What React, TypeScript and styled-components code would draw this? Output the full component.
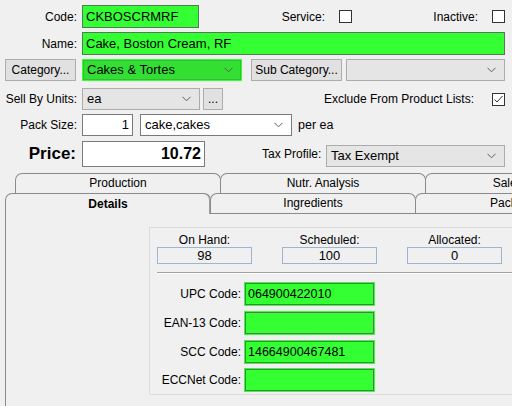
import React from "react";
import styled, { createGlobalStyle } from "styled-components";

const GlobalStyle = createGlobalStyle`
  html, body {
    margin: 0;
    padding: 0;
    background: #f0f0f0;
    width: 512px;
    height: 406px;
    overflow: hidden;
  }
  body {
    font-family: "Liberation Sans", Arial, sans-serif;
    font-size: 13px;
    color: #000;
  }
  * { box-sizing: border-box; }
`;

const Page = styled.div`
  width: 512px;
  height: 406px;
  overflow: hidden;
  display: flex;
  flex-direction: column;
  padding-top: 5px;
`;

const Row = styled.div<{ $h: number; $mt?: number; $pl?: number }>`
  display: flex;
  align-items: center;
  height: ${(p) => p.$h}px;
  margin-top: ${(p) => p.$mt ?? 0}px;
  padding-left: ${(p) => p.$pl ?? 0}px;
  flex-shrink: 0;
`;

const Label = styled.span<{ $w: number; $ml?: number; $bold?: boolean }>`
  width: ${(p) => p.$w}px;
  margin-left: ${(p) => p.$ml ?? 0}px;
  flex-shrink: 0;
  text-align: right;
  white-space: nowrap;
  font-weight: ${(p) => (p.$bold ? 700 : 400)};
  font-size: ${(p) => (p.$bold ? "17px" : "12px")};
  color: #000;
`;

const Field = styled.div<{
  $w: number;
  $h?: number;
  $ml?: number;
  $green?: boolean;
  $right?: boolean;
  $bold?: boolean;
}>`
  width: ${(p) => p.$w}px;
  height: ${(p) => p.$h ?? 23}px;
  margin-left: ${(p) => p.$ml ?? 0}px;
  flex-shrink: 0;
  display: flex;
  align-items: center;
  justify-content: ${(p) => (p.$right ? "flex-end" : "flex-start")};
  padding: 0 3px 1px 3px;
  background: ${(p) => (p.$green ? "#33ff33" : "#ffffff")};
  border: 1px solid ${(p) => (p.$green ? "#56785a" : "#7a7a7a")};
  font-weight: ${(p) => (p.$bold ? 700 : 400)};
  font-size: ${(p) => (p.$bold ? "16px" : "13px")};
  white-space: nowrap;
  overflow: hidden;
`;

const ComboBox = styled.div<{ $w: number; $ml?: number; $kind: "gray" | "white" | "green"; $end?: boolean }>`
  width: ${(p) => p.$w}px;
  height: 22px;
  margin-left: ${(p) => p.$ml ?? 0}px;
  align-self: ${(p) => (p.$end ? "flex-end" : "center")};
  flex-shrink: 0;
  display: flex;
  align-items: center;
  justify-content: space-between;
  padding: 0 8px 1px 4px;
  background: ${(p) => (p.$kind === "green" ? "#33df33" : p.$kind === "white" ? "#ffffff" : "#e5e5e5")};
  border: 1px solid ${(p) => (p.$kind === "green" ? "#33ff33" : p.$kind === "white" ? "#7a7a7a" : "#acacac")};
  box-shadow: ${(p) => (p.$kind === "green" ? "inset 0 0 0 1px #2fbf2f" : "none")};
  white-space: nowrap;
`;

const Chevron = () => (
  <svg width="9" height="6" viewBox="0 0 9 6" style={{ flexShrink: 0 }}>
    <polyline points="0.5,0.8 4.5,4.8 8.5,0.8" fill="none" stroke="#5e5e5e" strokeWidth="1" />
  </svg>
);

const Button = styled.div<{ $w: number; $ml?: number }>`
  width: ${(p) => p.$w}px;
  height: 22px;
  margin-left: ${(p) => p.$ml ?? 0}px;
  flex-shrink: 0;
  display: flex;
  align-items: center;
  justify-content: center;
  padding-bottom: 1px;
  background: #e1e1e1;
  border: 1px solid #adadad;
  font-size: 12px;
  white-space: nowrap;
`;

const Check = styled.div<{ $ml: number }>`
  width: 13px;
  height: 13px;
  margin-left: ${(p) => p.$ml}px;
  flex-shrink: 0;
  background: #ffffff;
  border: 1px solid #333333;
  display: flex;
  align-items: center;
  justify-content: center;
`;

const Plain = styled.span<{ $ml: number; $size?: number }>`
  margin-left: ${(p) => p.$ml}px;
  font-size: ${(p) => p.$size ?? 12}px;
  white-space: nowrap;
`;

const Spacer = styled.div`
  flex: 1;
`;

/* ---- tabs ---- */
const TabArea = styled.div`
  margin-top: 6px;
  display: flex;
  flex-direction: column;
  flex: 1;
  min-height: 0;
`;

const TabRow = styled.div<{ $pl: number; $front?: boolean }>`
  display: flex;
  height: 20px;
  padding-left: ${(p) => p.$pl}px;
  flex-shrink: 0;
  position: relative;
  z-index: ${(p) => (p.$front ? 2 : 1)};
`;

const Tab = styled.div<{ $active?: boolean; $first?: boolean }>`
  width: 206px;
  flex-shrink: 0;
  margin-left: ${(p) => (p.$first ? 0 : -1)}px;
  height: ${(p) => (p.$active ? 21 : 20)}px;
  display: flex;
  align-items: center;
  justify-content: center;
  padding-bottom: 1px;
  background: #f0f0f0;
  border: 1px solid #8a8a8a;
  border-bottom: none;
  border-radius: 7px 7px 0 0;
  font-size: 12px;
  font-weight: ${(p) => (p.$active ? 700 : 400)};
  box-shadow: ${(p) => (p.$active ? "inset -1px 0 0 #a0a0a0" : "none")};
  position: relative;
  z-index: ${(p) => (p.$active ? 3 : 1)};
  white-space: nowrap;
  overflow: hidden;
`;

const Panel = styled.div`
  flex: 1;
  margin-left: 5px;
  border-left: 1px solid #8a8a8a;
  border-top: 1px solid #8a8a8a;
  background: #f0f0f0;
  display: flex;
  padding: 13px 0 0 143px;
  position: relative;
  z-index: 1;
`;

const Group = styled.div`
  width: 380px;
  height: 168px;
  flex-shrink: 0;
  border: 1px solid #dcdcdc;
  display: flex;
  flex-direction: column;
  padding: 5px 0 0 0;
`;

const StatsRow = styled.div`
  display: flex;
  gap: 30px;
  padding-left: 7px;
`;

const StatCol = styled.div`
  width: 95px;
  display: flex;
  flex-direction: column;
  align-items: center;
`;

const StatLabel = styled.div`
  height: 14px;
  line-height: 14px;
  font-size: 12px;
`;

const StatBox = styled.div`
  width: 95px;
  height: 17px;
  border: 1px solid #9cb5d3;
  display: flex;
  align-items: center;
  justify-content: center;
  padding-bottom: 1px;
`;

const Separator = styled.div`
  margin: 8px 0 0 7px;
  height: 1px;
  background: #a0a0a0;
  box-shadow: 0 1px 0 #ffffff;
`;

const CodeRow = styled.div<{ $mt: number }>`
  display: flex;
  align-items: center;
  margin-top: ${(p) => p.$mt}px;
  height: 24px;
`;

const CodeField = styled.div`
  width: 131px;
  height: 24px;
  margin-left: 3px;
  background: #33ff33;
  border: 1px solid #33ff33;
  box-shadow: inset 0 0 0 1px #4f7a52;
  display: flex;
  align-items: center;
  padding: 0 4px 1px 3px;
  font-size: 12.5px;
  white-space: nowrap;
`;

const CheckMark = () => (
  <svg width="11" height="11" viewBox="0 0 11 11">
    <polyline points="1.5,5.5 4,8 9.5,2" fill="none" stroke="#333" strokeWidth="1" />
  </svg>
);

const stats = [
  { label: "On Hand:", value: "98" },
  { label: "Scheduled:", value: "100" },
  { label: "Allocated:", value: "0" },
];

const codes = [
  { label: "UPC Code:", value: "064900422010", mt: 9 },
  { label: "EAN-13 Code:", value: "", mt: 5 },
  { label: "SCC Code:", value: "14664900467481", mt: 5 },
  { label: "ECCNet Code:", value: "", mt: 4 },
];

export default function App() {
  return (
    <>
      <GlobalStyle />
      <Page>
        <Row $h={23}>
          <Label $w={77}>Code:</Label>
          <Field $w={117} $ml={5} $green>
            CKBOSCRMRF
          </Field>
          <Label $w={126}>Service:</Label>
          <Check $ml={14} />
          <Label $w={126}>Inactive:</Label>
          <Check $ml={14} />
        </Row>

        <Row $h={23} $mt={4}>
          <Label $w={77}>Name:</Label>
          <Field $w={423} $ml={5} $green>
            Cake, Boston Cream, RF
          </Field>
        </Row>

        <Row $h={22} $mt={4} $pl={5}>
          <Button $w={71}>Category...</Button>
          <ComboBox $w={160} $ml={6} $kind="green">
            <span>Cakes &amp; Tortes</span>
            <Chevron />
          </ComboBox>
          <Button $w={91} $ml={9}>
            Sub Category...
          </Button>
          <ComboBox $w={159} $ml={4} $kind="gray">
            <span />
            <Chevron />
          </ComboBox>
        </Row>

        <Row $h={22} $mt={7}>
          <Label $w={77}>Sell By Units:</Label>
          <ComboBox $w={118} $ml={5} $kind="gray">
            <span>ea</span>
            <Chevron />
          </ComboBox>
          <Button $w={20} $ml={3}>
            ...
          </Button>
          <Label $w={251}>Exclude From Product Lists:</Label>
          <Check $ml={18}>
            <CheckMark />
          </Check>
        </Row>

        <Row $h={22} $mt={4}>
          <Label $w={77}>Pack Size:</Label>
          <Field $w={51} $h={22} $ml={5} $right>
            1
          </Field>
          <ComboBox $w={152} $ml={7} $kind="white">
            <span>cake,cakes</span>
            <Chevron />
          </ComboBox>
          <Plain $ml={6} $size={12.5}>
            per ea
          </Plain>
        </Row>

        <Row $h={26} $mt={5}>
          <Label $w={76} $bold>
            Price:
          </Label>
          <Field $w={123} $h={26} $ml={6} $right $bold>
            10.72
          </Field>
          <Plain $ml={57}>Tax Profile:</Plain>
          <Spacer />
          <ComboBox $w={179} $kind="gray" $end style={{ marginRight: 7 }}>
            <span>Tax Exempt</span>
            <Chevron />
          </ComboBox>
        </Row>

        <TabArea>
          <TabRow $pl={15}>
            <Tab $first>Production</Tab>
            <Tab>Nutr. Analysis</Tab>
            <Tab>Sales History</Tab>
          </TabRow>
          <TabRow $pl={5} $front>
            <Tab $first $active>
              Details
            </Tab>
            <Tab>Ingredients</Tab>
            <Tab>Packaging</Tab>
          </TabRow>
          <Panel>
            <Group>
              <StatsRow>
                {stats.map((s) => (
                  <StatCol key={s.label}>
                    <StatLabel>{s.label}</StatLabel>
                    <StatBox>{s.value}</StatBox>
                  </StatCol>
                ))}
              </StatsRow>
              <Separator />
              {codes.map((c) => (
                <CodeRow key={c.label} $mt={c.mt}>
                  <Label $w={91}>{c.label}</Label>
                  <CodeField>{c.value}</CodeField>
                </CodeRow>
              ))}
            </Group>
          </Panel>
        </TabArea>
      </Page>
    </>
  );
}
